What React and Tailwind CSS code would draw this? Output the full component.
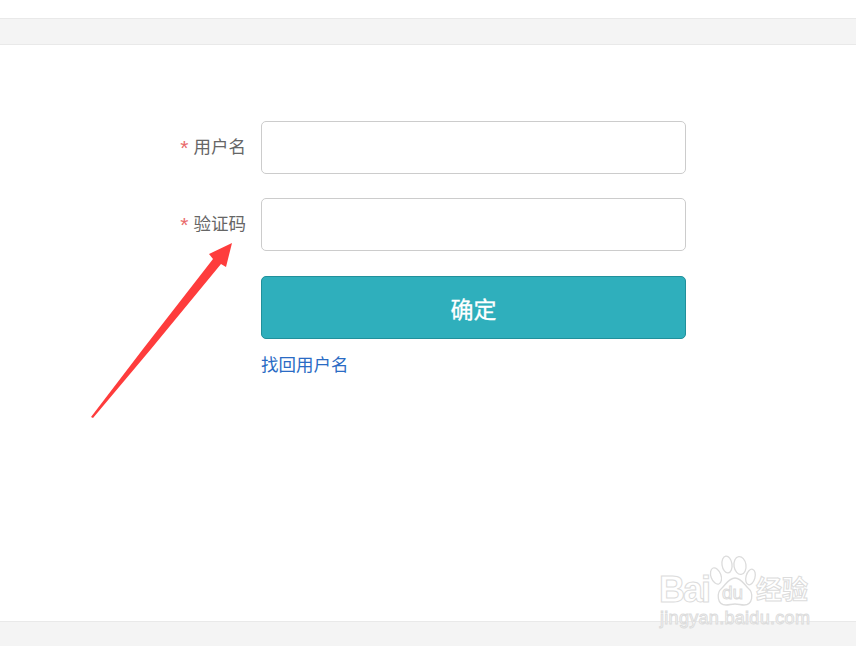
const fontStack = { fontFamily: '"Liberation Sans", "Noto Sans CJK SC", sans-serif' };

const Field = ({ label }) => (
  <div className="flex items-center gap-[15px] h-[53px]">
    <label className="flex items-center justify-end gap-[5px] w-[246px] text-[17.5px] leading-[26px] text-[#666] -mt-[1px]">
      <span className="h-[26px] pt-[1px] text-[21px] leading-[26px] text-[#e96a6a]">*</span>
      <span>{label}</span>
    </label>
    <input className="w-[425px] h-[53px] bg-white border border-[#ccc] rounded-[5px]" />
  </div>
);

const Arrow = () => (
  <svg className="absolute left-0 top-0 pointer-events-none" width="856" height="646">
    <polygon
      points="91,417 143,349 213,259 209,254 232,243 226,267 221,264 151,349 93,418"
      fill="#fe3c3c"
    />
  </svg>
);

const outlined = 'text-white [-webkit-text-stroke:1px_#dcdcdc]';

const Watermark = () => (
  <div className="absolute left-[659px] top-[555px] flex flex-col pointer-events-none">
    <div className="flex items-start h-[53px]">
      <span className={`w-[51px] mt-[17px] text-[36px] leading-[36px] font-bold tracking-[-2px] ${outlined}`}>
        Bai
      </span>
      <div className="relative w-[46px] h-[52px]">
        <svg className="overflow-visible" width="46" height="52" fill="white" stroke="#dcdcdc" strokeWidth="1.3">
          <ellipse cx="6" cy="21" rx="5" ry="8.5" transform="rotate(-20 6 21)" />
          <ellipse cx="17" cy="9.5" rx="5" ry="8.5" transform="rotate(-8 17 9.5)" />
          <ellipse cx="30" cy="10.5" rx="6" ry="9" transform="rotate(-8 30 10.5)" />
          <ellipse cx="40.5" cy="22" rx="4.5" ry="8" transform="rotate(15 40.5 22)" />
          <path d="M25 23c6 0 9 6 13 10 6 5 5 17-4 17-3 0-6-1-9-1s-6 1-9 1c-9 0-10-12-4-17 4-4 7-10 13-10z" />
        </svg>
        <span className={`absolute left-[12px] top-[28px] text-[19px] leading-[20px] ${outlined}`}>du</span>
      </div>
      <span className={`mt-[22px] text-[26px] leading-[26px] font-bold whitespace-nowrap ${outlined}`}>
        经验
      </span>
    </div>
    <span className={`ml-[1px] text-[18px] leading-[20px] tracking-[0.3px] whitespace-nowrap ${outlined}`}>
      jingyan.baidu.com
    </span>
  </div>
);

export default function App() {
  return (
    <div className="relative w-[856px] h-[646px] overflow-hidden bg-white flex flex-col" style={fontStack}>
      <div className="h-[18px] shrink-0 bg-white" />
      <div className="h-[27px] shrink-0 bg-[#f4f4f4] border-y border-[#e9e9e9]" />

      <main className="flex-1 flex flex-col gap-[24px] pt-[76px]">
        <Field label="用户名" />
        <Field label="验证码" />
        <div className="flex flex-col gap-[13px] ml-[261px] w-[425px] mt-[1px]">
          <button className="w-full h-[63px] pt-[5px] bg-[#2fafbc] border border-[#21909b] rounded-[5px] text-[23px] leading-[30px] text-white [-webkit-text-stroke:0.3px_white]">
            确定
          </button>
          <a href="#" className="block text-[17.5px] leading-[26px] text-[#2a6bc4]">
            找回用户名
          </a>
        </div>
      </main>

      <div className="h-[25px] shrink-0 bg-[#f4f4f4] border-t border-[#e9e9e9]" />

      <Arrow />
      <Watermark />
    </div>
  );
}
